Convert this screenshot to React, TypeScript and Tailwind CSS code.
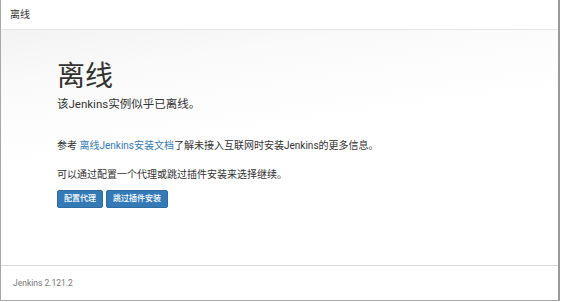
const App = () => {
    return (
        <div className="w-[562px] h-[302px] bg-white font-['Roboto','Noto_Sans_CJK_SC',sans-serif] text-[#333]">
            <div className="w-[560px] h-[301px] flex flex-col border-l border-l-[#a8a8a8] border-r-2 border-r-[#9a9a9a] border-b border-b-[#a8a8a8]">
                <div className="h-[30px] shrink-0 flex items-center pl-[9px] border-b border-b-[#e5e5e5] bg-white">
                    <h4 className="text-[10px] leading-none">离线</h4>
                </div>

                <div className="flex-1 px-[56px] pt-[30px] bg-[linear-gradient(172deg,#f3f3f3_0%,#fafafa_18%,#ffffff_45%)]">
                    <h1 className="text-[28px] leading-[34px] font-normal text-[#333]">离线</h1>
                    <p className="mt-[2px] text-[11.5px] leading-[16px]">该Jenkins实例似乎已离线。</p>

                    <p className="mt-[27px] text-[10px] leading-[14px]">
                        参考 <a href="#" className="text-[#337ab7]">离线Jenkins安装文档</a>了解未接入互联网时安装Jenkins的更多信息。
                    </p>
                    <p className="mt-[15px] text-[10px] leading-[14px]">可以通过配置一个代理或跳过插件安装来选择继续。</p>

                    <div className="mt-[8px] flex gap-[3px]">
                        <button className="h-[18px] px-[6px] rounded-[2px] bg-[#337ab7] border border-[#2e6da4] text-white text-[8px] font-medium leading-none">配置代理</button>
                        <button className="h-[18px] px-[6px] rounded-[2px] bg-[#337ab7] border border-[#2e6da4] text-white text-[8px] font-medium leading-none">跳过插件安装</button>
                    </div>
                </div>

                <div className="h-[35px] shrink-0 flex items-center pl-[12px] border-t border-t-[#d8d8d8] bg-white">
                    <span className="text-[8.5px] text-[#777]">Jenkins 2.121.2</span>
                </div>
            </div>
        </div>
    );
};

export default App;
